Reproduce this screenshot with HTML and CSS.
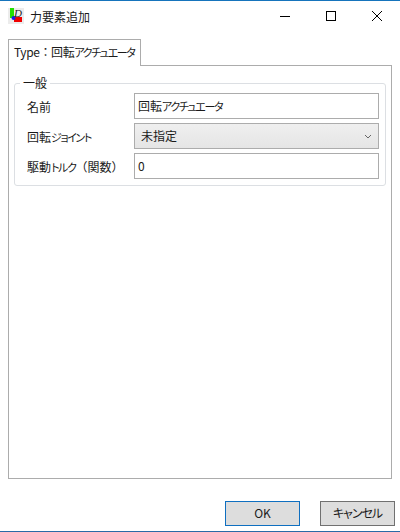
FILE: index.html
```html
<!DOCTYPE html>
<html lang="ja">
<head>
  <meta charset="UTF-8" />
  <title>力要素追加</title>
  <link rel="stylesheet" href="styles.css">
</head>
<body>
  <div class="window">
    <!-- Title bar -->
    <div class="titlebar">
      <svg class="app-icon" width="16" height="16" viewBox="0 0 16 16">
        <rect width="16" height="16" fill="#ececec"/>
        <rect x="2" y="0" width="4" height="10" fill="#22e000"/>
        <rect x="6" y="9" width="8" height="5" fill="#f00000"/>
        <circle cx="5.500" cy="10" r="2" fill="#1020f0"/>
        <text class="icon-letter" x="6" y="9">D</text>
      </svg>
      <span class="title">力要素追加</span>
      <div class="controls">
        <svg width="10" height="10" viewBox="0 0 10 10"><path d="M0 5.500h10" stroke="#000"/></svg>
        <svg width="10" height="10" viewBox="0 0 10 10"><rect x="0.500" y="0.500" width="9" height="9" fill="none" stroke="#000"/></svg>
        <svg width="10" height="10" viewBox="0 0 10 10"><path d="M0 0l10 10M10 0l-10 10" stroke="#000" stroke-width="1"/></svg>
      </div>
    </div>

    <!-- Tab -->
    <div class="tabs">
      <div class="tab">Type：回転<span class="kana">アクチュエータ</span></div>
    </div>
    <div class="tab-panel">
      <fieldset class="group">
        <legend>一般</legend>
        <div class="row">
          <label>名前</label>
          <div class="field">回転<span class="kana">アクチュエータ</span></div>
        </div>
        <div class="row">
          <label>回転<span class="kana">ジョイント</span></label>
          <div class="field select">
            <span>未指定</span>
            <svg width="8" height="5" viewBox="0 0 8 5"><path d="M1 1l3 3 3-3" fill="none" stroke="#666"/></svg>
          </div>
        </div>
        <div class="row">
          <label>駆動<span class="kana">トルク</span>（関数）</label>
          <div class="field">0</div>
        </div>
      </fieldset>
    </div>

    <!-- Buttons -->
    <div class="buttons">
      <div class="btn default">OK</div>
      <div class="btn"><span class="kana">キャンセル</span></div>
    </div>
  </div>
</body>
</html>
```

FILE: styles.css
```css
html, body {
  margin: 0;
  height: 100%;
}

body {
  font-family: "Noto Sans CJK JP", "Liberation Sans", sans-serif;
  font-size: 12px;
  color: #1a1a1a;
  background-color: white;
}

/* katakana runs are narrower than the kanji in the original font */
.kana {
  font-size: 11px;
  font-feature-settings: "palt";
  letter-spacing: -1.4px;
}

.window {
  box-sizing: border-box;
  width: 400px;
  height: 532px;
  border-top: 1px solid #1674bc;
  border-bottom: 1px solid #2a6aa6;
  display: flex;
  flex-direction: column;
}

.titlebar {
  display: flex;
  align-items: center;
  height: 30px;
  padding-left: 8px;
}

.app-icon {
  margin-right: 6px;
}

.icon-letter {
  font-family: "Liberation Serif", serif;
  font-size: 11px;
  font-style: italic;
  fill: #222;
}

.title {
  font-size: 12px;
  flex: 1;
}

.controls {
  display: flex;
  gap: 36px;
  padding-right: 18px;
}

.tabs {
  display: flex;
  height: 27px;
  margin: 8px 0 0 8px;
}

.tab {
  box-sizing: border-box;
  width: 133px;
  height: 27px;
  padding-left: 5px;
  line-height: 24px;
  letter-spacing: -0.4px;
  white-space: nowrap;
  border: 1px solid #acacac;
  border-bottom: none;
  background-color: white;
  position: relative;
  z-index: 1;
}

.tab-panel {
  box-sizing: border-box;
  width: 384px;
  height: 414px;
  margin: -1px 0 0 8px;
  padding: 10px 5px 0;
  border: 1px solid #acacac;
}

.group {
  box-sizing: border-box;
  height: 110px;
  margin: 0;
  padding: 3px 6px 0 12px;
  border: 1px solid #dcdfe3;
  border-radius: 3px;
}

.group legend {
  padding: 0 3px;
  margin-left: -7px;
  line-height: 14px;
  font-size: 12px;
}

.row {
  display: flex;
  align-items: center;
  height: 26px;
  margin-bottom: 4px;
}

.row label {
  width: 107px;
  white-space: nowrap;
}

.field {
  box-sizing: border-box;
  width: 245px;
  height: 26px;
  padding-left: 3px;
  line-height: 24px;
  border: 1px solid #acacac;
}

.select {
  display: flex;
  align-items: center;
  justify-content: space-between;
  padding: 0 6px 0 6px;
  background: linear-gradient(#efefef, #e5e5e5);
}

.buttons {
  display: flex;
  justify-content: flex-end;
  gap: 20px;
  padding: 22px 5px 0 0;
}

.btn {
  box-sizing: border-box;
  width: 75px;
  height: 25px;
  line-height: 22px;
  text-align: center;
  background-color: #dddddd;
  border: 1px solid #707070;
}

.btn.default {
  border-color: #0f6fc0;
}

.btn .kana {
  font-size: 12px;
  letter-spacing: -1px;
}
```
